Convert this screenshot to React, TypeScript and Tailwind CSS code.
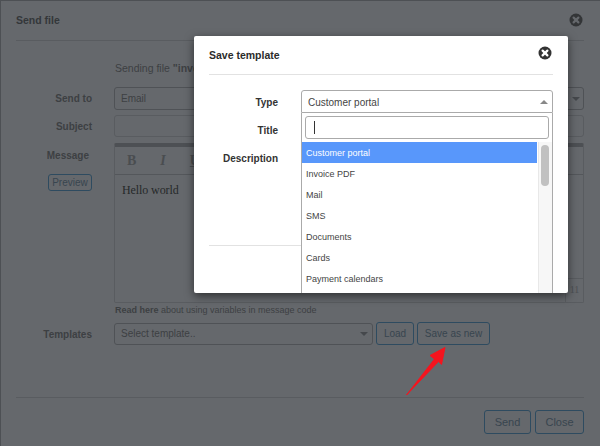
import React from "react";

const sans = "font-['Liberation_Sans',Arial,sans-serif]";

function Label({ children, className = "" }: { children: React.ReactNode; className?: string }) {
  return <div className={`w-[76px] text-right text-[10px] font-bold text-[#3d4043] ${className}`}>{children}</div>;
}

function DimButton({ children, className = "" }: { children: React.ReactNode; className?: string }) {
  return (
    <div className={`flex items-center justify-center rounded-[3px] border border-[#2e4b60] text-[#38454f] ${className}`}>
      {children}
    </div>
  );
}

function CloseIcon({ dark }: { dark?: boolean }) {
  return (
    <svg width="14" height="14" viewBox="0 0 14 14">
      <circle cx="7" cy="7" r="6.5" fill={dark ? "#333537" : "#333"} />
      <path d="M4.6 4.6 L9.4 9.4 M9.4 4.6 L4.6 9.4" stroke={dark ? "#65686c" : "#fff"} strokeWidth="2.2" strokeLinecap="round" />
    </svg>
  );
}

const options = ["Customer portal", "Invoice PDF", "Mail", "SMS", "Documents", "Cards", "Payment calendars"];

export default function App() {
  return (
    <div className={`relative h-[446px] w-[600px] overflow-hidden bg-[#65686c] ${sans}`}>
      {/* Send file (dimmed) */}
      <div className="flex h-full flex-col border-l border-t border-[#4d5054] pl-[15px] pr-[16px]">
        <div className="flex h-[40px] items-center justify-between border-b border-[#595c60]">
          <span className="text-[10.5px] font-bold text-[#34373a]">Send file</span>
          <span className="mr-[1px] mb-[2px]"><CloseIcon dark /></span>
        </div>
        <div className="mt-[20px] pl-[99px] text-[10.5px] leading-[14px] text-[#3d4043]">
          Sending file <b>"invoice.pdf"</b>
        </div>
        <div className="mt-[12px] flex items-center">
          <Label>Send to</Label>
          <div className="ml-[22px] flex h-[23px] flex-1 items-center justify-between rounded-[3px] border border-[#4f5256] pl-[6px] pr-[3px] text-[10px] text-[#3d4043]">
            <span>Email</span>
            <span className="h-0 w-0 border-x-[4px] border-t-[4px] border-x-transparent border-t-[#45484c]" />
          </div>
        </div>
        <div className="mt-[5px] flex items-center">
          <Label>Subject</Label>
          <div className="ml-[22px] h-[22px] flex-1 rounded-[3px] border border-[#595c60]" />
        </div>
        <div className="mt-[6px] flex">
          <div className="flex w-[97px] flex-col items-start">
            <div className="w-[73px] pt-[5px] text-right text-[10px] font-bold text-[#3d4043]">Message</div>
            <DimButton className="ml-[32px] mt-[11px] h-[17px] w-[44px] text-[10px]">Preview</DimButton>
          </div>
          <div className="ml-[1px] flex h-[160px] flex-1 flex-col rounded-[2px] border border-[#595c60] border-t-[4px] border-t-[#4d5054]">
            <div className="flex h-[28px] items-center gap-[24px] border-b border-[#54575b] pl-[12px] font-['Liberation_Serif',serif] text-[14px] font-bold text-[#4a4d50]">
              <span>B</span>
              <span className="italic">I</span>
              <span className="underline">U</span>
            </div>
            <div className="flex-1 pl-[7px] pt-[6px] font-['Liberation_Serif',serif] text-[12px] tracking-[-0.1px] text-[#26282a]">Hello world</div>
            <div className="flex h-[24px] justify-end">
              <div className="w-[18px] border-l border-t border-[#595c60] pt-[3px] text-center font-['Liberation_Serif',serif] text-[10px] text-[#4d5054]">11</div>
            </div>
          </div>
        </div>
        <div className="mt-[1px] pl-[99px] text-[9px] leading-[12px] text-[#3d4043]">
          <b>Read here</b> about using variables in message code
        </div>
        <div className="mt-[6px] flex items-center">
          <Label className="pt-[2px]">Templates</Label>
          <div className="ml-[22px] flex h-[22px] w-[259px] items-center justify-between rounded-[3px] border border-[#4f5256] pl-[6px] pr-[4px] text-[10px] text-[#3d4043]">
            <span>Select template..</span>
            <span className="h-0 w-0 border-x-[4px] border-t-[4px] border-x-transparent border-t-[#45484c]" />
          </div>
          <DimButton className="ml-[3px] h-[23px] w-[38px] text-[10px]">Load</DimButton>
          <DimButton className="ml-[3px] h-[23px] w-[73px] text-[10px]">Save as new</DimButton>
        </div>
        <div className="mt-[52px] border-t border-[#595c60]" />
        <div className="mt-[12px] flex justify-end gap-[4px]">
          <DimButton className="h-[24px] w-[47px] text-[11px]">Send</DimButton>
          <DimButton className="h-[24px] w-[49px] text-[11px]">Close</DimButton>
        </div>
      </div>

      {/* Red arrow annotation */}
      <svg className="absolute left-[400px] top-[340px]" width="50" height="60" viewBox="400 340 50 60">
        <path
          d="M445 347.5 L430 355.5 L434.5 359 L406.5 395 L438.5 361.5 L441.5 364.5 Z"
          fill="#f5141e"
          stroke="#f5141e"
          strokeWidth="1"
          strokeLinejoin="round"
        />
      </svg>

      {/* Save template */}
      <div className="absolute left-[194px] top-[36px] flex h-[257px] w-[374px] flex-col rounded-[2px] bg-white px-[15px] shadow-[0_3px_10px_rgba(0,0,0,0.55)]">
        <div className="flex h-[40px] items-center justify-between border-b border-[#e2e2e2] pt-[1px]">
          <span className="text-[10.5px] font-bold text-[#2b2b2b]">Save template</span>
          <span className="mr-[1px] mb-[6px]"><CloseIcon /></span>
        </div>
        <div className="flex flex-1 items-start">
          <div className="w-[69px] pt-[21px] text-right text-[10px] font-bold leading-[14px] text-[#333]">
            <div>Type</div>
            <div className="mt-[14px]">Title</div>
            <div className="mt-[14px]">Description</div>
            <div className="mt-[79px] -mr-[23px] border-t border-[#e2e2e2]" />
          </div>
          <div className="ml-[23px] mt-[15px] flex w-[252px] flex-col">
            <div className="flex h-[23px] items-center justify-between rounded-t-[3px] border border-[#aaa] pl-[6px] pr-[4px] pt-[1px] text-[10px] text-[#444]">
              <span>Customer portal</span>
              <span className="h-0 w-0 border-x-[4px] border-b-[4px] border-x-transparent border-b-[#888]" />
            </div>
            <div className="flex h-[180px] flex-col border-x border-[#aaa]">
              <div className="mx-[3px] mt-[3px] flex h-[23px] items-center rounded-[3px] border border-[#aaa] pl-[8px]">
                <span className="h-[13px] w-[1px] bg-[#333]" />
              </div>
              <div className="mt-[3px] flex flex-1 overflow-hidden">
                <div className="flex-1">
                  {options.map((o, i) => (
                    <div
                      key={o}
                      className={`flex h-[21px] items-center pl-[4px] pt-[2px] text-[9px] ${i === 0 ? "bg-[#5897fb] text-white" : "text-[#444]"}`}
                    >
                      {o}
                    </div>
                  ))}
                </div>
                <div className="ml-[1px] h-full w-[14px] border-l border-[#e8e8e8] bg-[#f7f7f7] pl-[2px] pt-[3px]">
                  <div className="h-[41px] w-[8px] rounded-[4px] bg-[#c1c1c1]" />
                </div>
              </div>
            </div>
          </div>
        </div>
      </div>
    </div>
  );
}
